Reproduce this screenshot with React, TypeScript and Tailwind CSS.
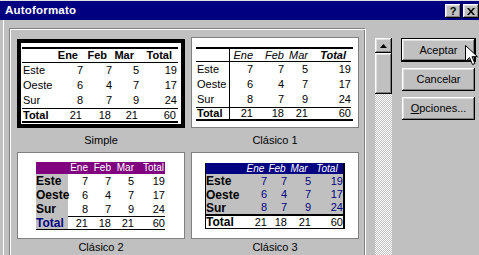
import React from "react";

const months = ["Ene", "Feb", "Mar", "Total"];
const rows = [
  { label: "Este", vals: [7, 7, 5, 19] },
  { label: "Oeste", vals: [6, 4, 7, 17] },
  { label: "Sur", vals: [8, 7, 9, 24] },
];
const totals = [21, 18, 21, 60];

// win98 style 3d edges
const raised =
  "bg-[#c0c0c0] shadow-[inset_-1px_-1px_#000,inset_1px_1px_#fff,inset_-2px_-2px_#808080,inset_2px_2px_#dfdfdf]";

const SimpleTable = () => {
  const cols = "grid grid-cols-[31px_30px_29px_27px_38px] items-center";
  return (
    <div className="w-[156px] border-y-2 border-black text-[11px] leading-none text-black">
      <div className={`${cols} h-[14px] border-b border-black font-bold`}>
        <span />
        {months.map((m) => (
          <span key={m} className="text-right pr-[5px]">
            {m}
          </span>
        ))}
      </div>
      {rows.map((r) => (
        <div key={r.label} className={`${cols} h-[15px]`}>
          <span className="pl-[1px]">{r.label}</span>
          {r.vals.map((v, i) => (
            <span key={i} className="text-right">
              {v}
            </span>
          ))}
        </div>
      ))}
      <div className={`${cols} h-[13px] border-t border-black`}>
        <span className="pl-[1px] font-bold">Total</span>
        {totals.map((v, i) => (
          <span key={i} className="text-right pr-[1px]">
            {v}
          </span>
        ))}
      </div>
    </div>
  );
};

const Clasico1Table = () => {
  const cols = "grid grid-cols-[34px_23px_31px_24px_43px] items-stretch";
  const cell = "flex items-center justify-end";
  return (
    <div className="w-[157px] pr-[2px] border-y-2 border-black text-[11px] leading-none text-black">
      <div className={`${cols} h-[13px] border-b border-black italic`}>
        <span className="border-r border-black" />
        {months.map((m) => (
          <span
            key={m}
            className={`${cell} ${m === "Total" ? "font-bold pr-[5px]" : ""}`}
          >
            {m}
          </span>
        ))}
      </div>
      {rows.map((r) => (
        <div key={r.label} className={`${cols} h-[15px]`}>
          <span className="flex items-center pl-[1px] border-r border-black">{r.label}</span>
          {r.vals.map((v, i) => (
            <span key={i} className={cell}>
              {v}
            </span>
          ))}
        </div>
      ))}
      <div className={`${cols} h-[12px] border-t border-black`}>
        <span className="flex items-center pl-[1px] border-r border-black font-bold">Total</span>
        {totals.map((v, i) => (
          <span key={i} className={cell}>
            {v}
          </span>
        ))}
      </div>
    </div>
  );
};

const Clasico2Table = () => {
  const cols = "grid grid-cols-[32px_20px_23px_23px_31px] items-stretch";
  const num = "flex items-center justify-end text-[11px]";
  return (
    <div className="w-[129px] leading-none text-black">
      <div className={`${cols} h-[12px] bg-[#800080] text-white text-[10px]`}>
        <span />
        {months.map((m) => (
          <span key={m} className={`flex items-center justify-end ${m === "Total" ? "pr-[1px]" : ""}`}>
            {m}
          </span>
        ))}
      </div>
      {rows.map((r) => (
        <div key={r.label} className={`${cols} h-[14px]`}>
          <span className="flex items-center bg-[#c0c0c0] text-[12px] font-bold">{r.label}</span>
          {r.vals.map((v, i) => (
            <span key={i} className={num}>
              {v}
            </span>
          ))}
        </div>
      ))}
      <div className={`${cols} h-[14px] border-b border-black`}>
        <span className="flex items-center bg-[#c0c0c0] text-[12px] font-bold text-[#000080]">Total</span>
        {totals.map((v, i) => (
          <span key={i} className={`${num} border-t border-black`}>
            {v}
          </span>
        ))}
      </div>
    </div>
  );
};

const Clasico3Table = () => {
  const cols = "grid grid-cols-[38px_23px_20px_24px_32px] items-stretch";
  const num = "flex items-center justify-end text-[11px]";
  return (
    <div className="w-[140px] border-l border-r-2 border-black leading-none">
      <div className={`${cols} h-[11px] bg-[#000080] text-white text-[10px] italic`}>
        <span />
        {months.map((m) => (
          <span key={m} className="flex items-center justify-center">
            {m}
          </span>
        ))}
      </div>
      <div className="bg-[#c0c0c0] border-b-2 border-black">
        {rows.map((r, ri) => (
          <div key={r.label} className={`${cols} ${ri === 0 ? "h-[14px]" : "h-[13px]"}`}>
            <span className="flex items-center text-[12px] font-bold text-black">{r.label}</span>
            {r.vals.map((v, i) => (
              <span key={i} className={`${num} text-[#000080]`}>
                {v}
              </span>
            ))}
          </div>
        ))}
      </div>
      <div className={`${cols} h-[13px] bg-white border-b border-black text-black`}>
        <span className="flex items-center text-[12px] font-bold">Total</span>
        {totals.map((v, i) => (
          <span key={i} className={num}>
            {v}
          </span>
        ))}
      </div>
    </div>
  );
};

const Card = ({ children, className = "" }: { children: React.ReactNode; className?: string }) => (
  <div className={`bg-white border border-[#808080] ${className}`}>{children}</div>
);

const Label = ({ text, h }: { text: string; h: string }) => (
  <div className={`${h} flex items-center justify-center text-[11px] text-black`}>{text}</div>
);

const Button = ({ children, isDefault }: { children: React.ReactNode; isDefault?: boolean }) =>
  isDefault ? (
    <div className="w-[75px] h-[24px] border border-black">
      <div className={`h-full flex items-center justify-center text-[11px] text-black ${raised}`}>
        {children}
      </div>
    </div>
  ) : (
    <div
      className={`ml-[1px] w-[73px] h-[23px] flex items-center justify-center text-[11px] text-black ${raised}`}
    >
      {children}
    </div>
  );

const App = () => {
  return (
    <div className="relative w-[479px] h-[255px] overflow-hidden bg-[#c0c0c0] font-['Liberation_Sans',Arial,sans-serif] select-none">
      <div className="h-[1px] bg-[#dfdfdf]" />
      {/* title bar */}
      <div className="h-[19px] bg-[#000080] flex items-center pl-[5px]">
        <span className="text-white font-bold text-[11.5px] tracking-[0.2px]">Autoformato</span>
        <div className="ml-auto flex gap-[2px] mt-[1px]">
          <div className={`w-[16px] h-[14px] flex items-center justify-center text-[11px] leading-none font-bold text-black ${raised}`}>
            ?
          </div>
          <div className={`w-[16px] h-[14px] flex items-center justify-center ${raised}`}>
            <svg width="8" height="7" viewBox="0 0 8 7">
              <path d="M0 0h2l2 2.5L6 0h2L5 3.5 8 7H6L4 4.5 2 7H0l3-3.5z" fill="#000" />
            </svg>
          </div>
        </div>
      </div>

      {/* body */}
      <div className="flex h-[235px]">
        <div className="ml-[3px] border-l border-white" />
        {/* format list */}
        <div className="ml-[5px] mt-[8px] w-[357px] h-[300px] border border-t-[#808080] border-l-[#808080] border-r-white border-b-white shadow-[inset_1px_1px_#fff,inset_-1px_-1px_#808080] pl-[7px] pt-[8px]">
          <div className="grid grid-cols-[168px_168px] gap-x-[6px]">
            <div className="h-[91px]">
              <div className="mt-[2px] h-[89px] bg-white border-4 border-black pl-[1px] pt-[4px]">
                <SimpleTable />
              </div>
            </div>
            <Card className="h-[91px] pl-[4px] pt-[9px]">
              <Clasico1Table />
            </Card>
            <Label text="Simple" h="h-[24px]" />
            <Label text="Clásico 1" h="h-[24px]" />
            <Card className="h-[87px] pl-[18px] pt-[9px]">
              <Clasico2Table />
            </Card>
            <Card className="h-[87px] pl-[13px] pt-[10px]">
              <Clasico3Table />
            </Card>
            <Label text="Clásico 2" h="h-[16px]" />
            <Label text="Clásico 3" h="h-[16px]" />
          </div>
        </div>

        {/* scrollbar */}
        <div className="ml-[9px] mt-[18px] w-[17px] flex flex-col">
          <div className={`h-[15px] flex items-center justify-center ${raised}`}>
            <svg width="7" height="4" viewBox="0 0 7 4">
              <path d="M3.5 0L7 4H0z" fill="#000" />
            </svg>
          </div>
          <div className={`h-[41px] ${raised}`} />
          <div className="flex-1 bg-[repeating-conic-gradient(#fff_0%_25%,#c0c0c0_0%_50%)] bg-[length:2px_2px]" />
        </div>

        {/* buttons */}
        <div className="ml-[9px] mt-[18px] flex flex-col gap-[6px]">
          <Button isDefault>Aceptar</Button>
          <Button>Cancelar</Button>
          <Button>
            <span>
              <span className="underline">O</span>pciones...
            </span>
          </Button>
        </div>
      </div>

      {/* mouse pointer over Aceptar */}
      <svg
        className="absolute left-[465px] top-[45px]"
        width="13"
        height="21"
        viewBox="0 0 13 21"
      >
        <path
          d="M0.5 0.5v16l4-4 3 7 2.5-1-3-6.8h5.5z"
          fill="#fff"
          stroke="#000"
          strokeWidth="1"
        />
      </svg>
    </div>
  );
};

export default App;
